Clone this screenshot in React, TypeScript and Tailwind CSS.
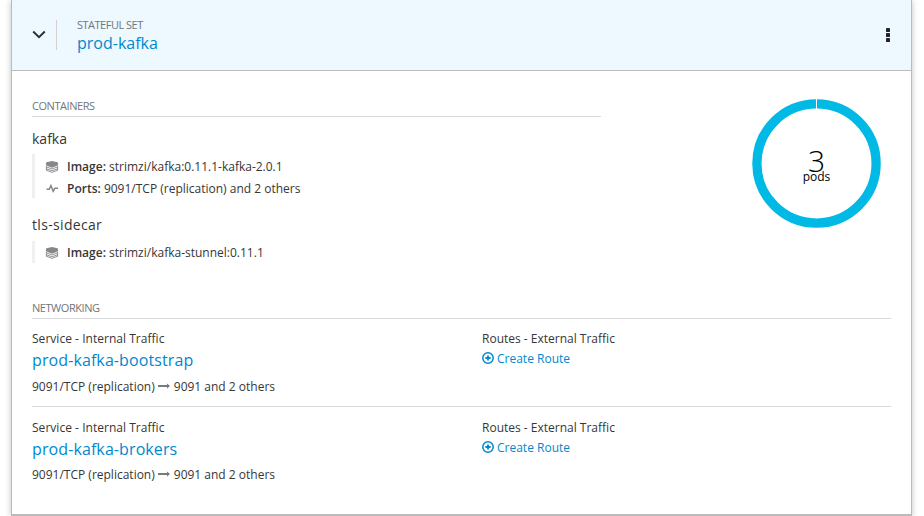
import React from "react";

function LayersIcon() {
  return (
    <svg width="14" height="12" viewBox="0 0 14 12" className="shrink-0 fill-[#85878a]">
      <path d="M7 0 12.4 1.3Q13 1.5 13 2V3.8Q13 4.3 12.5 4.5L7 6.7 1.5 4.5Q1 4.3 1 3.8V2Q1 1.5 1.6 1.3Z" />
      <path
        d="M1 5.7 7 8 13 5.7M1 7.6 7 9.8 13 7.6M1 9 7 11.4 13 9M1.4 5V9.2M12.6 5V9.2"
        fill="none"
        stroke="#85878a"
        strokeWidth=".9"
      />
    </svg>
  );
}

function PulseIcon() {
  return (
    <svg width="14" height="12" viewBox="0 0 14 12" className="shrink-0" fill="none" stroke="#85878a" strokeWidth="1.5">
      <path d="M1.5 6.2H4.2L5.9 2.6 8.2 8.3 9.8 5.2H13" />
    </svg>
  );
}

function ArrowIcon() {
  return (
    <svg width="12" height="6" viewBox="0 0 12 6" className="ml-[3px] mr-1 inline-block align-[2px] fill-[#77797b]">
      <path d="M0 2H9V.6L12 3 9 5.4V4H0Z" />
    </svg>
  );
}

function PlusCircleIcon() {
  return (
    <svg width="12" height="12" viewBox="0 0 12 12" className="shrink-0" fill="none" stroke="#0088ce">
      <circle cx="6" cy="6" r="5.2" strokeWidth="1.5" />
      <path d="M6 3.4V8.6M3.4 6H8.6" strokeWidth="1.8" />
    </svg>
  );
}

function SectionTitle({ children }: { children: React.ReactNode }) {
  return (
    <h3 className="h-[19px] border-b border-[#d9d9d9] text-[11px] leading-[15px] tracking-[-0.45px] text-[#72767b]">
      {children}
    </h3>
  );
}

function Detail({ icon, label, value }: { icon: React.ReactNode; label: string; value: string }) {
  return (
    <div className="flex h-[22px] items-center">
      {icon}
      <span className="ml-2 whitespace-nowrap leading-[22px]">
        <span className="font-semibold">{label}</span> {value}
      </span>
    </div>
  );
}

function Service({ name, portsGap }: { name: string; portsGap: string }) {
  return (
    <div className="grid grid-cols-[450px_1fr]">
      <div>
        <div className="leading-5 tracking-[0.03px]">Service - Internal Traffic</div>
        <div className="text-[16px] leading-[22px] tracking-[0.1px] text-[#0088ce]">{name}</div>
        <div className={`${portsGap} leading-5`}>
          9091/TCP (replication)
          <ArrowIcon />
          9091 and 2 others
        </div>
      </div>
      <div>
        <div className="leading-5">Routes - External Traffic</div>
        <div className="flex h-5 items-center gap-[3px] leading-5 text-[#0088ce]">
          <span className="-mt-0.5">
            <PlusCircleIcon />
          </span>
          Create Route
        </div>
      </div>
    </div>
  );
}

export default function App() {
  return (
    <div className="h-[516px] overflow-hidden bg-white pl-[11px] font-['Open_Sans',sans-serif] text-[12px] text-[#363636]">
      <section className="h-[516px] w-[901px] border-x border-b-2 border-[#bbbbbb] bg-white shadow-[0_1px_6px_rgba(0,0,0,0.25)]">
        <header className="flex h-[71px] border-b border-[#bbbbbb] bg-[#edf8ff]">
          <svg width="14" height="10" viewBox="0 0 14 10" className="ml-5 mt-[30px]" fill="none" stroke="#292e34" strokeWidth="1.9">
            <path d="M1.2 1.5 7 7.2 12.8 1.5" />
          </svg>
          <div className="ml-[10px] mt-5 h-[30px] w-px bg-[#d1d1d1]" />
          <div className="ml-5 mt-[17px]">
            <div className="text-[11px] leading-[16px] tracking-[-0.5px] text-[#72767b]">STATEFUL SET</div>
            <h2 className="text-[16px] leading-[20px] text-[#0088ce]">prod-kafka</h2>
          </div>
          <svg width="4" height="14" viewBox="0 0 4 14" className="ml-auto mr-[21px] mt-[28px] fill-[#222427]">
            <rect width="4" height="4" rx=".4" />
            <rect y="5" width="4" height="4" rx=".4" />
            <rect y="10" width="4" height="4" rx=".4" />
          </svg>
        </header>

        <div className="flex h-[227px] px-5 pt-[27px]">
          <div className="w-[569px]">
            <SectionTitle>CONTAINERS</SectionTitle>
            <h4 className="mt-[12px] text-[14px] leading-5">kafka</h4>
            <div className="mt-[5px] h-11 border-l-[3px] border-[#f0f0f0] pl-[10px] pt-[2px]">
              <Detail icon={<LayersIcon />} label="Image:" value="strimzi/kafka:0.11.1-kafka-2.0.1" />
              <Detail icon={<PulseIcon />} label="Ports:" value="9091/TCP (replication) and 2 others" />
            </div>
            <h4 className="mt-[17px] text-[14px] leading-5 tracking-[0.33px]">tls-sidecar</h4>
            <div className="mt-[6px] h-[22px] border-l-[3px] border-[#f0f0f0] pl-[10px] pt-px">
              <Detail icon={<LayersIcon />} label="Image:" value="strimzi/kafka-stunnel:0.11.1" />
            </div>
          </div>
          <svg width="130" height="130" viewBox="0 0 130 130" className="ml-[150px]">
            <circle cx="65.5" cy="65.5" r="59.6" fill="none" stroke="#00b9e4" strokeWidth="9.3" />
            <rect x="65" y="0" width="1" height="12" fill="#fff" />
            <text x="65.5" y="74" textAnchor="middle" className="fill-black text-[30px] font-light">3</text>
            <text x="65.5" y="83" textAnchor="middle" className="fill-black text-[12px]">pods</text>
          </svg>
        </div>

        <div className="px-5 pt-[2px]">
          <SectionTitle>NETWORKING</SectionTitle>
          <div className="mt-[10px] h-[78px] border-b border-[#d9d9d9]">
            <Service name="prod-kafka-bootstrap" portsGap="mt-[6px]" />
          </div>
          <div className="pt-[11px]">
            <Service name="prod-kafka-brokers" portsGap="mt-[5px]" />
          </div>
        </div>
      </section>
    </div>
  );
}
